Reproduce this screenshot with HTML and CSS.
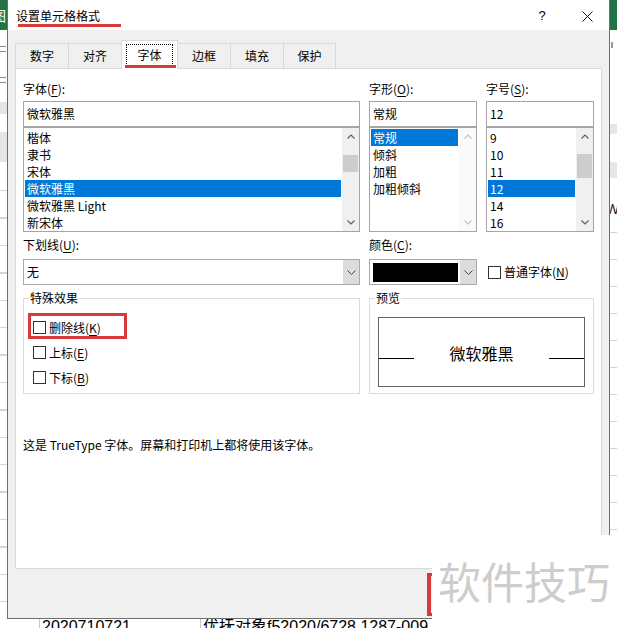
FILE: index.html
```html
<!DOCTYPE html>
<html lang="zh-CN">
<head>
<meta charset="utf-8">
<title>设置单元格格式</title>
<link rel="stylesheet" href="styles.css">
</head>
<body>
<div class="screen">
  <div class="sheet">
    <div class="strip strip-left">
      <div class="xl-top"><span class="xl-glyph">图</span></div>
      <div class="strip-body"></div>
    </div>
    <div class="sheet-mid">
      <div class="sheet-row">
        <span class="cell cell-a">2020710721</span>
        <span class="cell cell-b">优抚对象f52020/6728 1287-009</span>
      </div>
    </div>
    <div class="strip strip-right">
      <div class="xl-top"></div>
      <div class="strip-body"><span class="peek">W</span></div>
    </div>
  </div>

  <div class="dialog">
    <div class="titlebar">
      <span class="title">设置单元格格式</span>
      <span class="mark-title"></span>
      <span class="help">?</span>
      <svg class="close" width="11" height="11" viewBox="0 0 11 11"><path d="M0.5 0.5 L10.5 10.5 M10.5 0.5 L0.5 10.5" stroke="#111" stroke-width="1" fill="none"/></svg>
    </div>
    <div class="body">
      <div class="tabs">
        <div class="tab">数字</div>
        <div class="tab">对齐</div>
        <div class="tab active"><span class="focus">字体</span><span class="mark-tab"></span></div>
        <div class="tab">边框</div>
        <div class="tab">填充</div>
        <div class="tab last">保护</div>
      </div>
      <div class="panel">
        <div class="row">
          <div class="col col-wide">
            <div class="label">字体(<u>F</u>):</div>
            <div class="textbox">微软雅黑</div>
            <div class="listbox">
              <ul class="items">
                <li>楷体</li>
                <li>隶书</li>
                <li>宋体</li>
                <li class="sel">微软雅黑</li>
                <li>微软雅黑 Light</li>
                <li>新宋体</li>
              </ul>
              <div class="scrollbar">
                <div class="sb-btn"><svg width="8" height="5" viewBox="0 0 8 5"><polyline points="0.5,4.5 4,1 7.5,4.5" fill="none" stroke="#606060" stroke-width="1.2"/></svg></div>
                <div class="thumb thumb-font"></div>
                <div class="sb-fill"></div>
                <div class="sb-btn"><svg width="8" height="5" viewBox="0 0 8 5"><polyline points="0.5,0.5 4,4 7.5,0.5" fill="none" stroke="#606060" stroke-width="1.2"/></svg></div>
              </div>
            </div>
          </div>
          <div class="col col-narrow">
            <div class="label">字形(<u>O</u>):</div>
            <div class="textbox">常规</div>
            <div class="listbox">
              <ul class="items">
                <li class="sel">常规</li>
                <li>倾斜</li>
                <li>加粗</li>
                <li>加粗倾斜</li>
              </ul>
              <div class="scrollbar disabled">
                <div class="sb-btn"><svg width="8" height="5" viewBox="0 0 8 5"><polyline points="0.5,4.5 4,1 7.5,4.5" fill="none" stroke="#c4c4c4" stroke-width="1.2"/></svg></div>
                <div class="sb-fill"></div>
                <div class="sb-btn"><svg width="8" height="5" viewBox="0 0 8 5"><polyline points="0.5,0.5 4,4 7.5,0.5" fill="none" stroke="#c4c4c4" stroke-width="1.2"/></svg></div>
              </div>
            </div>
          </div>
          <div class="col col-narrow">
            <div class="label">字号(<u>S</u>):</div>
            <div class="textbox">12</div>
            <div class="listbox">
              <ul class="items">
                <li>9</li>
                <li>10</li>
                <li>11</li>
                <li class="sel">12</li>
                <li>14</li>
                <li>16</li>
              </ul>
              <div class="scrollbar">
                <div class="sb-btn"><svg width="8" height="5" viewBox="0 0 8 5"><polyline points="0.5,4.5 4,1 7.5,4.5" fill="none" stroke="#606060" stroke-width="1.2"/></svg></div>
                <div class="thumb thumb-size"></div>
                <div class="sb-fill"></div>
                <div class="sb-btn"><svg width="8" height="5" viewBox="0 0 8 5"><polyline points="0.5,0.5 4,4 7.5,0.5" fill="none" stroke="#606060" stroke-width="1.2"/></svg></div>
              </div>
            </div>
          </div>
        </div>

        <div class="row row-second">
          <div class="col col-wide">
            <div class="label label-second">下划线(<u>U</u>):</div>
            <div class="combo">
              <span class="value">无</span>
              <span class="drop"><svg width="9" height="5" viewBox="0 0 9 5"><polyline points="0.5,0.5 4.5,4.5 8.5,0.5" fill="none" stroke="#444" stroke-width="1"/></svg></span>
            </div>
          </div>
          <div class="col col-narrow">
            <div class="label label-second">颜色(<u>C</u>):</div>
            <div class="combo">
              <span class="swatch"></span>
              <span class="drop"><svg width="9" height="5" viewBox="0 0 9 5"><polyline points="0.5,0.5 4.5,4.5 8.5,0.5" fill="none" stroke="#444" stroke-width="1"/></svg></span>
            </div>
          </div>
          <div class="col col-narrow">
            <div class="label label-second"></div>
            <div class="check-line">
              <span class="box"></span><span>普通字体(<u>N</u>)</span>
            </div>
          </div>
        </div>

        <div class="row row-groups">
          <div class="group group-effects">
            <span class="group-title">特殊效果</span>
            <div class="check"><span class="box"></span><span>删除线(<u>K</u>)</span><span class="mark-box"></span></div>
            <div class="check"><span class="box"></span><span>上标(<u>E</u>)</span></div>
            <div class="check"><span class="box"></span><span>下标(<u>B</u>)</span></div>
          </div>
          <div class="group group-preview">
            <span class="group-title">预览</span>
            <div class="preview-box">
              <span class="pline"></span>
              <span class="ptext">微软雅黑</span>
              <span class="pline"></span>
            </div>
          </div>
        </div>

        <p class="desc">这是 TrueType 字体。屏幕和打印机上都将使用该字体。</p>
      </div>
    </div>
  </div>

  <span class="mark-bracket"></span>
  <div class="watermark">软件技巧</div>
</div>
</body>
</html>
```

FILE: styles.css
```css
* { box-sizing: border-box; }
html, body { margin: 0; padding: 0; }
body {
  font-family: "Noto Sans CJK SC", "Noto Sans", sans-serif;
  font-size: 12px;
  color: #000;
  background: #fff;
}
.screen {
  position: relative;
  width: 617px;
  height: 628px;
  overflow: hidden;
  background: #fff;
}

/* spreadsheet behind the dialog */
.sheet {
  position: absolute;
  inset: 0;
  display: grid;
  grid-template-columns: 7px 1fr 7px;
}
.strip { display: flex; flex-direction: column; overflow: hidden; }
.xl-top { height: 30px; background: #217346; overflow: hidden; }
.xl-glyph {
  display: block;
  color: #fff;
  font-size: 14px;
  line-height: 30px;
  margin-left: -8px;
}
.strip-body { flex: 1; background-color: #fff; }
.strip-left .strip-body {
  background:
    linear-gradient(#8a8a8a, #8a8a8a) 0 16px / 6px 1px no-repeat,
    linear-gradient(#8a8a8a, #8a8a8a) 0 21px / 6px 1px no-repeat,
    linear-gradient(#8a8a8a, #8a8a8a) 0 47px / 6px 1px no-repeat,
    linear-gradient(#8a8a8a, #8a8a8a) 0 52px / 6px 1px no-repeat,
    linear-gradient(#e6e6e6, #e6e6e6) 0 72px / 100% 12px no-repeat,
    linear-gradient(#e6e6e6, #e6e6e6) 0 102px / 100% 30px no-repeat,
    repeating-linear-gradient(to bottom, transparent 0 26px, #d4d4d4 26px 27.4px) 0 134px / 100% 500px no-repeat,
    #fff;
}
.strip-right .strip-body {
  background:
    linear-gradient(#9a9a9a, #9a9a9a) 1px 12px / 2px 6px no-repeat,
    linear-gradient(#e6e6e6, #e6e6e6) 0 94px / 100% 10px no-repeat,
    linear-gradient(#e6e6e6, #e6e6e6) 0 132px / 100% 16px no-repeat,
    repeating-linear-gradient(to bottom, transparent 0 26px, #d4d4d4 26px 27px) 0 176px / 100% 500px no-repeat,
    #fff;
}
.peek {
  display: block;
  margin-top: 171px;
  margin-left: -4px;
  font-family: "Liberation Sans", sans-serif;
  font-size: 14px;
  line-height: 16px;
  color: #222;
}
.sheet-mid {
  display: flex;
  flex-direction: column;
  justify-content: flex-end;
}
.sheet-row {
  height: 20px;
  margin-bottom: -9px;
  display: flex;
  padding-left: 32px;
  font-family: "Liberation Sans", "Noto Sans CJK SC", sans-serif;
  font-size: 16px;
  line-height: 20px;
}
.cell { border-left: 1px solid #c8c8c8; padding-left: 2px; white-space: nowrap; }
.cell-a { width: 161px; }

/* dialog */
.dialog {
  position: absolute;
  left: 7px;
  top: 0;
  width: 603px;
  height: 619px;
  border: 1px solid #6e6e6e;
  border-top: none;
  background: #f0f0f0;
  display: flex;
  flex-direction: column;
}
.titlebar {
  position: relative;
  height: 30px;
  background: #fff;
  display: flex;
  align-items: center;
  padding: 2px 0 0 8px;
  flex: none;
}
.title { line-height: 16px; }
.mark-title {
  position: absolute;
  left: 10px;
  top: 24px;
  width: 103px;
  height: 3px;
  background: #d8393b;
}
.help {
  margin-left: auto;
  width: 20px;
  text-align: center;
  font-family: "Liberation Sans", sans-serif;
  font-size: 13px;
  line-height: 16px;
}
.close { margin: 0 16px 0 30px; display: block; }

.body { flex: 1; padding: 10px 7px 0; }
.tabs {
  display: flex;
  align-items: flex-end;
  height: 29px;
}
.tab {
  width: 54px;
  height: 25px;
  margin-bottom: 1px;
  margin-left: -1px;
  border: 1px solid #d9d9d9;
  border-bottom: none;
  background: #f0f0f0;
  display: flex;
  align-items: center;
  justify-content: center;
  line-height: 16px;
}
.tab:first-child { margin-left: 0; }
.tab.last { width: 53px; }
.tab.active {
  position: relative;
  z-index: 1;
  width: 57px;
  height: 29px;
  margin-bottom: 0;
  background: #fff;
  align-items: flex-start;
  padding-top: 3px;
}
.focus {
  width: 47px;
  height: 22px;
  border: 1px dotted #000;
  display: flex;
  align-items: center;
  justify-content: center;
  line-height: 16px;
}
.mark-tab {
  position: absolute;
  left: 3px;
  top: 24px;
  width: 51px;
  height: 3px;
  background: #d8393b;
}

.panel {
  margin-top: -1px;
  height: 501px;
  background: #fff;
  border: 1px solid #d9d9d9;
  padding: 10px 7px 0;
}
.row { display: flex; gap: 9px; }
.col-wide { width: 337px; }
.col-narrow { width: 108px; }
.label {
  height: 20px;
  line-height: 20px;
  margin-bottom: 2px;
  white-space: nowrap;
}
.label-second { margin-bottom: 4px; }
u { text-underline-offset: 2px; }
.textbox {
  height: 26px;
  border: 1px solid #a5a5a5;
  padding: 0 3px;
  line-height: 24px;
  white-space: nowrap;
}
.listbox {
  height: 105px;
  border: 1px solid #a5a5a5;
  display: flex;
}
.items {
  flex: 1;
  list-style: none;
  margin: 0;
  padding: 1px;
}
.items li {
  height: 17px;
  line-height: 17px;
  padding-left: 2px;
  white-space: nowrap;
}
.items li.sel { background: #0078d7; color: #fff; }
.scrollbar {
  width: 17px;
  background: #f0f0f0;
  display: flex;
  flex-direction: column;
}
.scrollbar.disabled { background: #fafafa; }
.sb-btn {
  height: 17px;
  display: flex;
  align-items: center;
  justify-content: center;
  flex: none;
}
.sb-btn svg { display: block; }
.sb-fill { flex: 1; }
.thumb { margin: 0 1px; background: #cdcdcd; flex: none; }
.thumb-font { margin-top: 10px; height: 17px; }
.thumb-size { margin-top: 9px; height: 24px; }

.row-second { margin-top: 3px; }
.combo {
  height: 26px;
  border: 1px solid #a9a9a9;
  background: #fff;
  display: flex;
}
.combo .value { flex: 1; padding-left: 3px; line-height: 24px; }
.combo .drop {
  width: 16px;
  background: #dcdcdc;
  display: flex;
  align-items: center;
  justify-content: center;
}
.swatch {
  width: 85px;
  height: 19px;
  margin: 3px 2px 0 3px;
  background: #000;
}
.check-line {
  height: 26px;
  display: flex;
  align-items: center;
  padding-left: 2px;
  white-space: nowrap;
  line-height: 16px;
}
.box {
  width: 13px;
  height: 13px;
  border: 1px solid #333;
  background: #fff;
  margin-right: 3px;
  flex: none;
}

.row-groups { margin-top: 13px; }
.group {
  position: relative;
  height: 96px;
  border: 1px solid #dcdcdc;
}
.group-effects { width: 337px; padding: 16px 0 0 9px; }
.group-preview { width: 225px; padding: 18px 0 0 8px; }
.group-title {
  position: absolute;
  top: -11px;
  left: 5px;
  padding: 0 1px;
  line-height: 20px;
  background: #fff;
}
.check {
  position: relative;
  height: 25px;
  display: flex;
  align-items: center;
  line-height: 16px;
  white-space: nowrap;
}
.mark-box {
  position: absolute;
  left: -5px;
  top: -2px;
  width: 99px;
  height: 26px;
  border: 3px solid #d8393b;
}
.preview-box {
  width: 207px;
  height: 70px;
  border: 1px solid #646464;
  display: flex;
  justify-content: space-between;
  align-items: flex-start;
}
.pline { width: 35px; height: 1px; background: #000; margin-top: 40px; }
.ptext { font-size: 16px; line-height: 24px; margin-top: 23px; }
.desc { margin: 41px 0 0; line-height: 20px; }

/* screenshot annotations / watermark */
.mark-bracket {
  position: absolute;
  left: 427px;
  top: 573px;
  width: 20px;
  height: 43px;
  border: 3px solid #d8393b;
  border-left-width: 4px;
}
.watermark {
  position: absolute;
  left: 432px;
  top: 535px;
  right: 0;
  bottom: 0;
  background: #fff;
  padding: 22px 0 0 6px;
  font-size: 43px;
  line-height: 46px;
  color: #cdcdcd;
  white-space: nowrap;
}
```
